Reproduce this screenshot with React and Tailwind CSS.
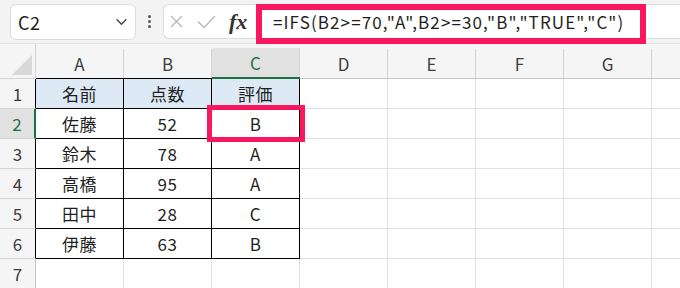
import React from 'react';

const cols = ['A', 'B', 'C', 'D', 'E', 'F', 'G'];

const rows = [
  ['名前', '点数', '評価'],
  ['佐藤', '52', 'B'],
  ['鈴木', '78', 'A'],
  ['高橋', '95', 'A'],
  ['田中', '28', 'C'],
  ['伊藤', '63', 'B'],
  ['', '', ''],
];

const font = { fontFamily: '"Noto Sans CJK JP", "Noto Sans", sans-serif' };

const Toolbar = () => (
  <div className="h-[44px] bg-[#f3f3f3] flex items-center border-b border-[#e3e3e3]">
    {/* name box */}
    <div className="ml-[10px] w-[126px] h-[36px] bg-white rounded-md border border-[#dcdcdc] flex items-center justify-between pl-[7px] pr-[7px]">
      <span className="text-[18px] text-[#1f1f1f] leading-none tracking-[0.5px]">C2</span>
      <svg className="w-[13px] h-[13px] text-[#444]" viewBox="0 0 12 12" fill="none" stroke="currentColor" strokeWidth="1.2">
        <path d="M1.5 4l4.5 4.5L10.5 4" />
      </svg>
    </div>
    {/* dots */}
    <div className="w-[27px] flex flex-col items-center gap-[2px]">
      <span className="w-[3px] h-[3px] bg-[#555] rounded-full" />
      <span className="w-[3px] h-[3px] bg-[#555] rounded-full" />
      <span className="w-[3px] h-[3px] bg-[#555] rounded-full" />
    </div>
    {/* function + formula box */}
    <div className="flex-1 h-[35px] bg-white rounded-l-md border border-r-0 border-[#dcdcdc] flex items-center">
      <div className="flex items-center pl-[6px] gap-[14px] w-[92px]">
        <svg className="w-[13px] h-[13px] text-[#b5b5b5]" viewBox="0 0 13 13" fill="none" stroke="currentColor" strokeWidth="1.2">
          <path d="M1 1l11 11M12 1L1 12" />
        </svg>
        <svg className="w-[19px] h-[13px] text-[#b5b5b5]" viewBox="0 0 19 13" fill="none" stroke="currentColor" strokeWidth="1.2">
          <path d="M1 6.5l6 6L18 1" />
        </svg>
        <span className="text-[22px] italic font-bold text-[#333] leading-none -ml-[1px]" style={{ fontFamily: '"Liberation Serif", "DejaVu Serif", serif' }}>
          fx
        </span>
      </div>
      <div className="pl-[17px] text-[17px] tracking-[1.1px] text-[#1f1f1f] whitespace-nowrap leading-none">
        =IFS(B2&gt;=70,"A",B2&gt;=30,"B","TRUE","C")
      </div>
    </div>
  </div>
);

const HeaderRow = () => (
  <div className="flex h-[35px] bg-[#f5f5f5]">
    <div className="w-[36px] shrink-0 flex items-end justify-end border-b border-r border-[#d4d4d4]">
      <svg className="w-[20px] h-[20px] mb-[3px] mr-[3px]" viewBox="0 0 20 20">
        <polygon points="20,0 20,20 0,20" fill="#d8d8d8" />
      </svg>
    </div>
    {cols.map((c, i) => {
      const sel = c === 'C';
      const inTable = i < 2;
      return (
        <div
          key={c}
          className={
            'w-[88px] shrink-0 flex items-end ' +
            (sel
              ? 'border-b-2 border-[#1e7145]'
              : inTable
              ? 'border-b border-black'
              : 'border-b border-[#c6c6c6]')
          }
        >
          <div
            className={
              'w-full h-[29px] flex items-center justify-center border-r border-[#d4d4d4] text-[17px] ' +
              (sel ? 'bg-[#e1e1e1] text-[#1e7145]' : 'text-[#3d3d3d]')
            }
          >
            {c}
          </div>
        </div>
      );
    })}
    <div className="flex-1 border-b border-[#c6c6c6]" />
  </div>
);

const DataRow = ({ n, values }) => {
  const inTable = n <= 6;
  const sel = n === 2;
  return (
    <div className="flex h-[30px]">
      <div
        className={
          'w-[36px] shrink-0 flex items-center justify-center text-[17px] border-b border-[#d4d4d4] ' +
          (sel
            ? 'bg-[#e1e1e1] text-[#1e7145] border-r-2 border-r-[#1e7145]'
            : inTable
            ? 'bg-[#f5f5f5] text-[#3d3d3d] border-r border-r-black'
            : 'bg-[#f5f5f5] text-[#3d3d3d] border-r border-r-[#c6c6c6]')
        }
      >
        {n}
      </div>
      {cols.map((c, i) => {
        const tableCell = inTable && i < 3;
        return (
          <div
            key={c}
            className={
              'w-[88px] shrink-0 flex items-center justify-center text-[17px] tracking-[0.5px] text-[#1f1f1f] ' +
              (tableCell ? 'border-b border-r border-black ' : 'border-b border-r border-[#e1e1e1] ') +
              (n === 1 && i < 3 ? 'bg-[#dde9f5]' : 'bg-white')
            }
          >
            {values[i] || ''}
          </div>
        );
      })}
      <div className="flex-1 border-b border-[#e1e1e1] bg-white" />
    </div>
  );
};

export default function App() {
  return (
    <div className="relative w-[680px] h-[288px] overflow-hidden bg-white" style={font}>
      <Toolbar />
      <HeaderRow />
      {rows.map((r, i) => (
        <DataRow key={i} n={i + 1} values={r} />
      ))}

      {/* annotation boxes */}
      <div className="absolute left-[256px] top-[4px] w-[390px] h-[40px] border-[6px] border-[#fb1660]" />
      <div className="absolute left-[207px] top-[105px] w-[98px] h-[37px] border-[5px] border-[#fb1660]" />
    </div>
  );
}
